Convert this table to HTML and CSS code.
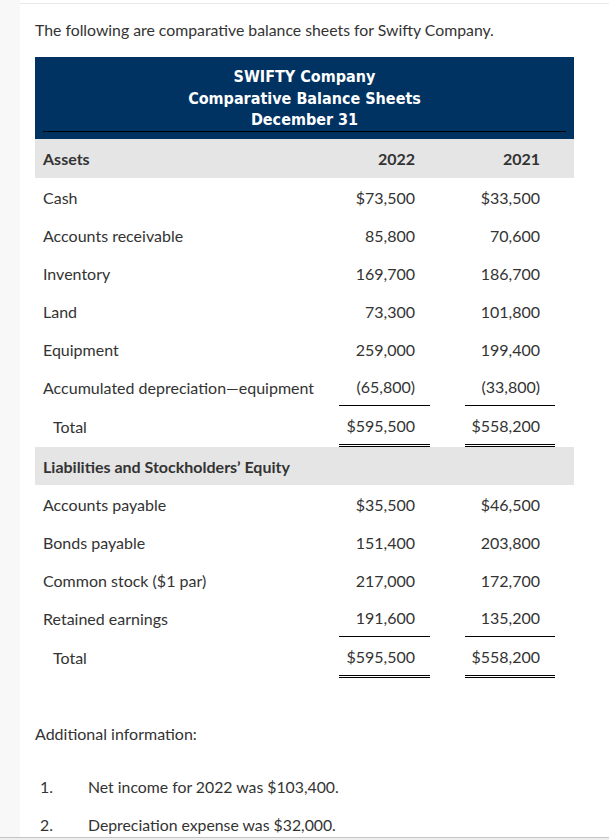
FILE: index.html
```html
<!DOCTYPE html>
<html>
<head>
<meta charset="utf-8">
<link rel="stylesheet" href="styles.css">
</head>
<body>
<div class="page">
  <div class="gutter"></div>
  <div class="main">
    <p class="intro">The following are comparative balance sheets for Swifty Company.</p>
    <div class="sheet">
      <div class="title">
        <div>SWIFTY Company</div>
        <div>Comparative Balance Sheets</div>
        <div>December 31</div>
        <div class="title-rule"></div>
      </div>
      <div class="row head first">
        <div class="label">Assets</div>
        <div class="num">2022</div>
        <div></div>
        <div class="num">2021</div>
        <div></div>
      </div>
      <div class="row">
        <div class="label">Cash</div>
        <div class="num">$73,500</div><div></div>
        <div class="num">$33,500</div><div></div>
      </div>
      <div class="row">
        <div class="label">Accounts receivable</div>
        <div class="num">85,800</div><div></div>
        <div class="num">70,600</div><div></div>
      </div>
      <div class="row">
        <div class="label">Inventory</div>
        <div class="num">169,700</div><div></div>
        <div class="num">186,700</div><div></div>
      </div>
      <div class="row">
        <div class="label">Land</div>
        <div class="num">73,300</div><div></div>
        <div class="num">101,800</div><div></div>
      </div>
      <div class="row">
        <div class="label">Equipment</div>
        <div class="num">259,000</div><div></div>
        <div class="num">199,400</div><div></div>
      </div>
      <div class="row">
        <div class="label">Accumulated depreciation—equipment</div>
        <div class="num single">(65,800)</div><div></div>
        <div class="num single">(33,800)</div><div></div>
      </div>
      <div class="row total">
        <div class="label indent">Total</div>
        <div class="num double">$595,500</div><div></div>
        <div class="num double">$558,200</div><div></div>
      </div>
      <div class="row head">
        <div class="label wide">Liabilities and Stockholders’ Equity</div>
      </div>
      <div class="row">
        <div class="label">Accounts payable</div>
        <div class="num">$35,500</div><div></div>
        <div class="num">$46,500</div><div></div>
      </div>
      <div class="row">
        <div class="label">Bonds payable</div>
        <div class="num">151,400</div><div></div>
        <div class="num">203,800</div><div></div>
      </div>
      <div class="row">
        <div class="label">Common stock ($1 par)</div>
        <div class="num">217,000</div><div></div>
        <div class="num">172,700</div><div></div>
      </div>
      <div class="row">
        <div class="label">Retained earnings</div>
        <div class="num single">191,600</div><div></div>
        <div class="num single">135,200</div><div></div>
      </div>
      <div class="row total">
        <div class="label indent">Total</div>
        <div class="num double">$595,500</div><div></div>
        <div class="num double">$558,200</div><div></div>
      </div>
    </div>
    <p class="additional">Additional information:</p>
    <ol class="info">
      <li><span class="marker">1.</span><span>Net income for 2022 was $103,400.</span></li>
      <li><span class="marker">2.</span><span>Depreciation expense was $32,000.</span></li>
    </ol>
  </div>
</div>
<div class="bottom-bar"></div>
</body>
</html>
```
FILE: styles.css
```css
html, body {
  margin: 0;
  padding: 0;
  background: #ffffff;
}
body {
  font-family: Lato, "Open Sans", sans-serif;
  font-size: 16px;
  color: #333333;
  height: 840px;
  overflow: hidden;
}
.page {
  display: flex;
  height: 837px;
}
.gutter {
  width: 20px;
  flex: none;
  background: #f8f8f8;
}
.main {
  flex: 1;
  margin-top: 3px;
  border-top: 1px solid #e9e9e9;
  padding-left: 15px;
}
.intro {
  margin: 16px 0 0;
  font-size: 15.8px;
  line-height: 20px;
}
.sheet {
  margin-top: 17px;
  width: 539px;
}
.title {
  background: #003262;
  color: #ffffff;
  font-family: "DejaVu Sans Condensed", "DejaVu Sans", sans-serif;
  font-weight: bold;
  font-size: 16px;
  line-height: 21.5px;
  text-align: center;
  padding-top: 9px;
  height: 82px;
  box-sizing: border-box;
  display: flex;
  flex-direction: column;
}
.title-rule {
  margin: 0 8px;
  border-top: 1px solid #000000;
}
.row {
  display: grid;
  grid-template-columns: 304px 91px 35px 90px 19px;
  height: 38px;
  align-items: stretch;
}
.row > div {
  display: flex;
  align-items: center;
}
.row.head {
  background: #e5e5e5;
  font-weight: bold;
}
.row.first {
  height: 39px;
}
.row.total {
  height: 41px;
}
.label {
  padding-left: 8px;
}
.label.indent {
  padding-left: 18px;
}
.label.wide {
  grid-column: 1 / -1;
}
.num {
  justify-content: flex-end;
  padding-right: 15px;
}
.num.single {
  border-bottom: 1px solid #000000;
}
.num.double {
  border-bottom: 3px double #000000;
}
.additional {
  margin: 46px 0 0;
  line-height: 20px;
}
.info {
  list-style: none;
  margin: 33px 0 0;
  padding: 0;
  font-size: 15.8px;
}
.info li {
  display: flex;
  line-height: 20px;
  margin-bottom: 18px;
}
.info .marker {
  width: 53px;
  padding-left: 5px;
  box-sizing: border-box;
}
.bottom-bar {
  height: 3px;
  border-top: 1px solid #c4c4c4;
  background: #eeeeee;
  box-sizing: border-box;
}
```
